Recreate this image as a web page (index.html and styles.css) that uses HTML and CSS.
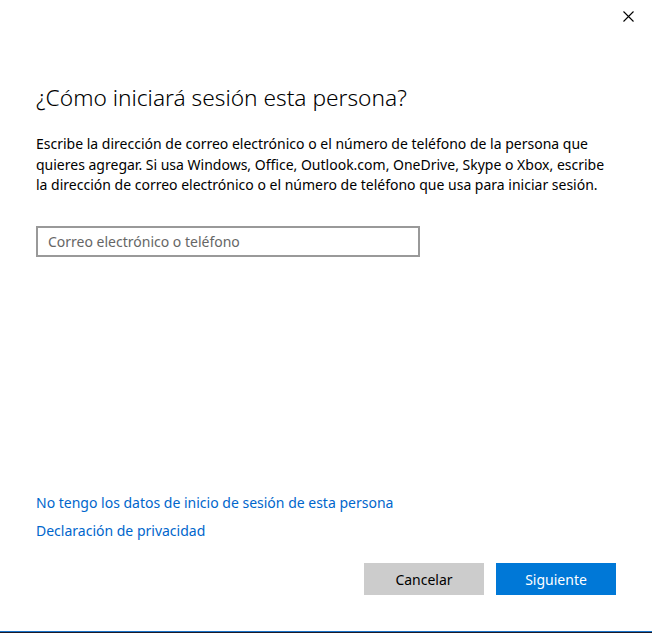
FILE: index.html
```html
<!DOCTYPE html>
<html lang="es">
<head>
<meta charset="utf-8">
<link rel="stylesheet" href="styles.css">
</head>
<body>
<div class="window">
  <div class="titlebar">
    <button class="close" aria-label="Cerrar">
      <svg width="11" height="11" viewBox="0 0 11 11"><path d="M0.5 0.5 L10.5 10.5 M10.5 0.5 L0.5 10.5" stroke="#000" stroke-width="1.1" fill="none"/></svg>
    </button>
  </div>
  <div class="content">
    <h1 class="title">¿Cómo iniciará sesión esta persona?</h1>
    <p class="desc">Escribe la dirección de correo electrónico o el número de teléfono de la persona que quieres agregar. Si usa Windows, Office, Outlook.com, OneDrive, Skype o Xbox, escribe la dirección de correo electrónico o el número de teléfono que usa para iniciar sesión.</p>
    <input class="field" type="text" placeholder="Correo electrónico o teléfono">
    <div class="spacer"></div>
    <div class="links">
      <a class="link" href="#">No tengo los datos de inicio de sesión de esta persona</a>
      <a class="link" href="#">Declaración de privacidad</a>
    </div>
    <div class="buttons">
      <button class="btn btn-secondary">Cancelar</button>
      <button class="btn btn-primary">Siguiente</button>
    </div>
  </div>
  <div class="bottom-edge"></div>
</div>
</body>
</html>
```
FILE: styles.css
```css
* { box-sizing: border-box; }
html, body {
  margin: 0;
  padding: 0;
  background: #fff;
}
body {
  width: 652px;
  height: 633px;
  overflow: hidden;
  font-family: "Noto Sans", "Open Sans", sans-serif;
  color: #000;
}
.window {
  height: 633px;
  display: flex;
  flex-direction: column;
}
.titlebar {
  height: 32px;
  display: flex;
  justify-content: flex-end;
}
.close {
  width: 46px;
  height: 32px;
  border: 0;
  background: transparent;
  padding: 0;
  display: flex;
  align-items: center;
  justify-content: center;
  margin-right: 1px;
}
.content {
  flex: 1;
  display: flex;
  flex-direction: column;
  padding: 50px 36px 36px 36px;
}
.title {
  margin: 0;
  font-weight: 300;
  font-size: 22.7px;
  line-height: 32px;
  letter-spacing: 0;
}
.desc {
  margin: 20px 0 0 0;
  font-size: 14px;
  line-height: 20.5px;
  width: 574px;
  letter-spacing: 0;
}
.field {
  margin-top: 30px;
  width: 384px;
  height: 31px;
  border: 2px solid #999;
  padding: 0 10px;
  font-family: inherit;
  font-size: 14px;
  color: #000;
  outline: none;
}
.field::placeholder { color: #666; }
.spacer { flex: 1; }
.links {
  display: flex;
  flex-direction: column;
  align-items: flex-start;
  gap: 8px;
}
.link {
  color: #0066cc;
  text-decoration: none;
  font-size: 14px;
  line-height: 20px;
  letter-spacing: 0;
}
.buttons {
  margin-top: 22px;
  display: flex;
  justify-content: flex-end;
  gap: 12px;
}
.btn {
  width: 120px;
  height: 32px;
  border: 0;
  font-family: inherit;
  font-size: 14px;
}
.btn-secondary { background: #cccccc; color: #000; }
.btn-primary { background: #0078d7; color: #fff; }
.bottom-edge {
  height: 2px;
  border-top: 1px solid #1a73c8;
  border-bottom: 1px solid #1a1a2a;
}
```
